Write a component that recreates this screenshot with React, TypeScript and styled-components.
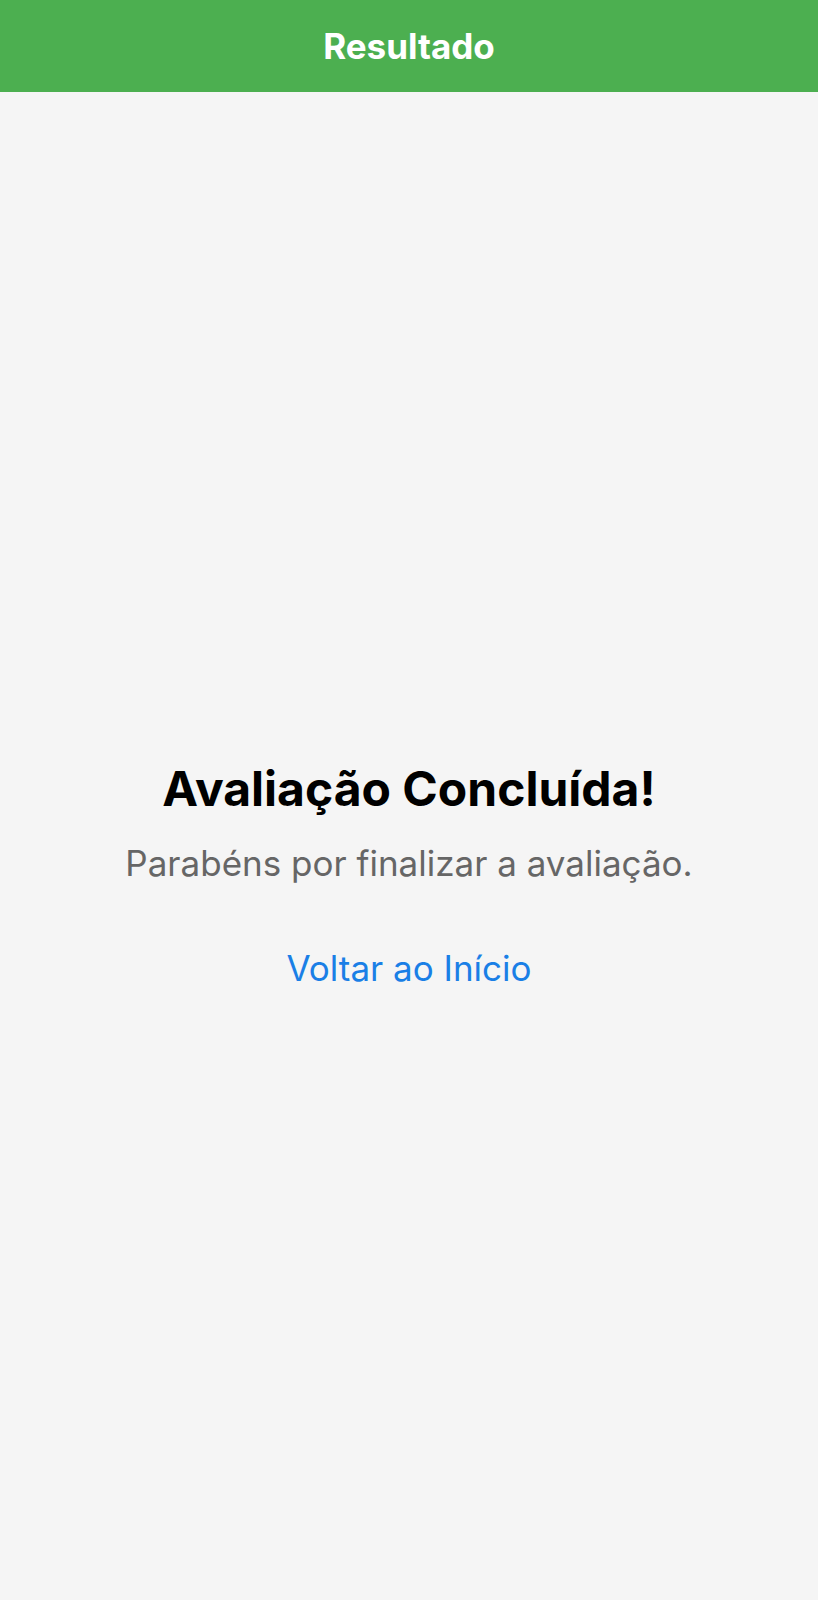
import React from 'react';
import styled, { createGlobalStyle } from 'styled-components';

const GlobalStyle = createGlobalStyle`
    html, body {
        margin: 0;
        padding: 0;
        background: #f5f5f5;
    }
    body {
        font-family: Inter, "Noto Sans", sans-serif;
    }
`;

const Screen = styled.div`
    display: flex;
    flex-direction: column;
    min-height: 1600px;
    background: #f5f5f5;
`;

const Header = styled.header`
    height: 92px;
    background: #4caf50;
    display: flex;
    align-items: center;
    justify-content: center;
`;

const HeaderTitle = styled.h1`
    margin: 0;
    color: #ffffff;
    font-size: 35px;
    font-weight: 700;
`;

const Body = styled.main`
    flex: 1;
    display: flex;
    flex-direction: column;
    align-items: center;
    justify-content: center;
    padding: 56px 20px 0;
`;

const Title = styled.h2`
    margin: 0;
    font-size: 48px;
    line-height: 58px;
    font-weight: 700;
    color: #000000;
`;

const Subtitle = styled.p`
    margin: 24px 0 0;
    font-size: 35px;
    line-height: 42px;
    color: #666666;
`;

const LinkButton = styled.button`
    margin-top: 63px;
    background: none;
    border: none;
    padding: 0;
    font-family: inherit;
    font-size: 35px;
    line-height: 42px;
    color: #1a7fe6;
    cursor: pointer;
`;

const App = () => {
    return (
        <>
            <GlobalStyle />
            <Screen>
                <Header>
                    <HeaderTitle>Resultado</HeaderTitle>
                </Header>
                <Body>
                    <Title>Avaliação Concluída!</Title>
                    <Subtitle>Parabéns por finalizar a avaliação.</Subtitle>
                    <LinkButton>Voltar ao Início</LinkButton>
                </Body>
            </Screen>
        </>
    );
};

export default App;
